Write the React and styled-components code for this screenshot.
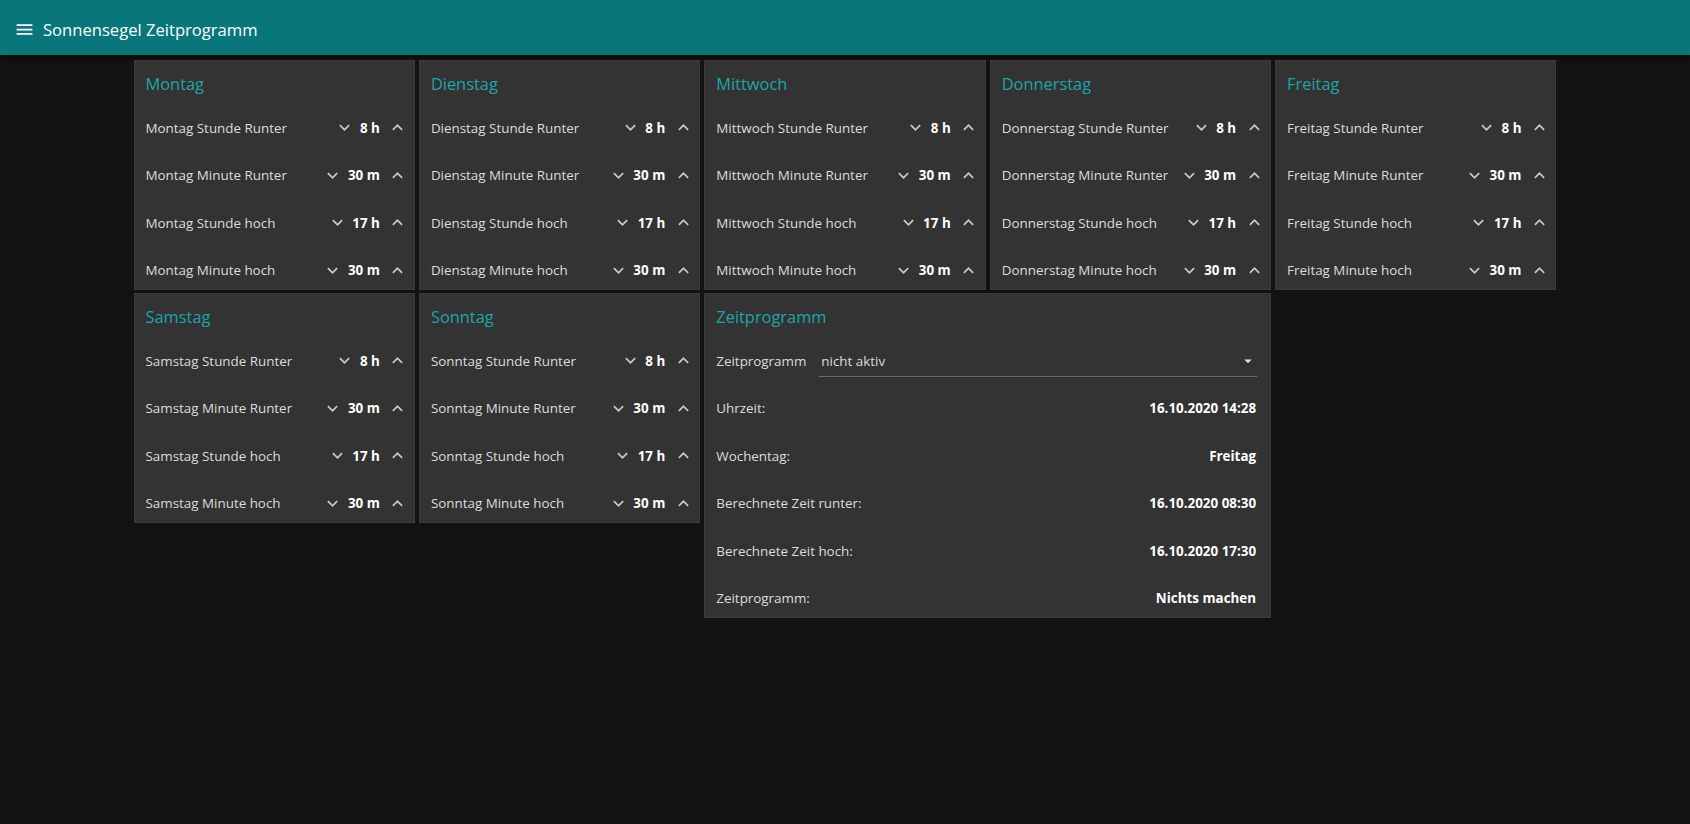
import React from "react"
import styled, { createGlobalStyle } from "styled-components"

const colors = {
  page: "#121212",
  bar: "#08767b",
  card: "#333333",
  accent: "#1ba5aa",
  text: "#dcdcdc",
  strong: "#ffffff",
  icon: "#c8c8c8",
}

const GlobalStyle = createGlobalStyle`
  html, body {
    margin: 0;
    background: ${colors.page};
    font-family: "Open Sans", "Noto Sans", sans-serif;
  }
  * {
    box-sizing: border-box;
  }
`

const AppBar = styled.header`
  height: 55px;
  display: flex;
  align-items: center;
  padding: 3px 14px 0;
  gap: 8px;
  background: ${colors.bar};
  color: #fff;
  box-shadow: 0 2px 4px rgba(0, 0, 0, 0.5);
`

const AppTitle = styled.h1`
  margin: 0;
  font-size: 16.6px;
  font-weight: 400;
`

const Main = styled.main`
  padding-top: 5px;
`

const Grid = styled.div`
  width: 1423px;
  margin: 0 auto;
  display: grid;
  grid-template-columns: repeat(5, 1fr);
  column-gap: 4px;
  row-gap: 3px;
  align-items: start;
`

const Card = styled.section`
  grid-column: span ${(p) => p.span || 1};
  height: ${(p) => p.height}px;
  background: ${colors.card};
  border: 1px solid #3b3b3b;
  overflow: hidden;
`

const CardTitle = styled.h2`
  margin: 0;
  height: 39px;
  padding: 13px 0 0 11px;
  font-size: 16.4px;
  line-height: 20px;
  font-weight: 400;
  color: ${colors.accent};
`

const Row = styled.div`
  height: 47.5px;
  padding: 8px ${(p) => p.right || 0}px 0 11px;
  display: flex;
  align-items: center;
  justify-content: space-between;
  font-size: 13.4px;
  color: ${colors.text};
  white-space: nowrap;
`

const Controls = styled.div`
  display: flex;
  align-items: center;
  margin-right: 4px;
`

const IconButton = styled.span`
  width: 24px;
  height: 24px;
  margin-right: ${(p) => p.gap || 0}px;
  display: flex;
  align-items: center;
  justify-content: center;
  color: ${colors.icon};
`

const Value = styled.span`
  font-weight: 700;
  color: ${colors.strong};
  margin-right: ${(p) => p.gap || 0}px;
  font-size: 13.4px;
`

const SelectLabel = styled.span`
  white-space: nowrap;
`

const Select = styled.div`
  flex: 1;
  height: 32px;
  margin: 0 1px 0 13px;
  padding: 2px 0 0 2px;
  display: flex;
  align-items: center;
  justify-content: space-between;
  border-bottom: 1px solid #6a6a6a;
  color: ${colors.text};
  font-size: 13.4px;
`

const MenuIcon = () => (
  <svg width="21" height="21" viewBox="0 0 24 24" fill="#fff">
    <path d="M3 18h18v-2H3v2zm0-5h18v-2H3v2zm0-7v2h18V6H3z" />
  </svg>
)

const Chevron = ({ up }) => (
  <svg width="21" height="21" viewBox="0 0 24 24" fill="currentColor">
    {up ? (
      <path d="M12 8l-6 6 1.41 1.41L12 10.83l4.59 4.58L18 14z" />
    ) : (
      <path d="M16.59 8.59L12 13.17 7.41 8.59 6 10l6 6 6-6z" />
    )}
  </svg>
)

const DropArrow = () => (
  <svg width="18" height="18" viewBox="0 0 24 24" fill="#e0e0e0">
    <path d="M7 10l5 5 5-5z" />
  </svg>
)

const days = ["Montag", "Dienstag", "Mittwoch", "Donnerstag", "Freitag", "Samstag", "Sonntag"]

const settings = [
  { label: "Stunde Runter", value: "8 h" },
  { label: "Minute Runter", value: "30 m" },
  { label: "Stunde hoch", value: "17 h" },
  { label: "Minute hoch", value: "30 m" },
]

const status = [
  { label: "Uhrzeit:", value: "16.10.2020 14:28" },
  { label: "Wochentag:", value: "Freitag" },
  { label: "Berechnete Zeit runter:", value: "16.10.2020 08:30" },
  { label: "Berechnete Zeit hoch:", value: "16.10.2020 17:30" },
  { label: "Zeitprogramm:", value: "Nichts machen" },
]

const DayCard = ({ day }) => (
  <Card height={230}>
    <CardTitle>{day}</CardTitle>
    {settings.map((s) => (
      <Row key={s.label}>
        <span>
          {day} {s.label}
        </span>
        <Controls>
          <IconButton gap={3}>
            <Chevron />
          </IconButton>
          <Value gap={6}>{s.value}</Value>
          <IconButton>
            <Chevron up />
          </IconButton>
        </Controls>
      </Row>
    ))}
  </Card>
)

const ProgramCard = () => (
  <Card span={2} height={325}>
    <CardTitle>Zeitprogramm</CardTitle>
    <Row right={12}>
      <SelectLabel>Zeitprogramm</SelectLabel>
      <Select>
        <span>nicht aktiv</span>
        <DropArrow />
      </Select>
    </Row>
    {status.map((s) => (
      <Row key={s.label} right={14}>
        <span>{s.label}</span>
        <Value>{s.value}</Value>
      </Row>
    ))}
  </Card>
)

const App = () => (
  <>
    <GlobalStyle />
    <AppBar>
      <MenuIcon />
      <AppTitle>Sonnensegel Zeitprogramm</AppTitle>
    </AppBar>
    <Main>
      <Grid>
        {days.map((d) => (
          <DayCard key={d} day={d} />
        ))}
        <ProgramCard />
      </Grid>
    </Main>
  </>
)

export default App
